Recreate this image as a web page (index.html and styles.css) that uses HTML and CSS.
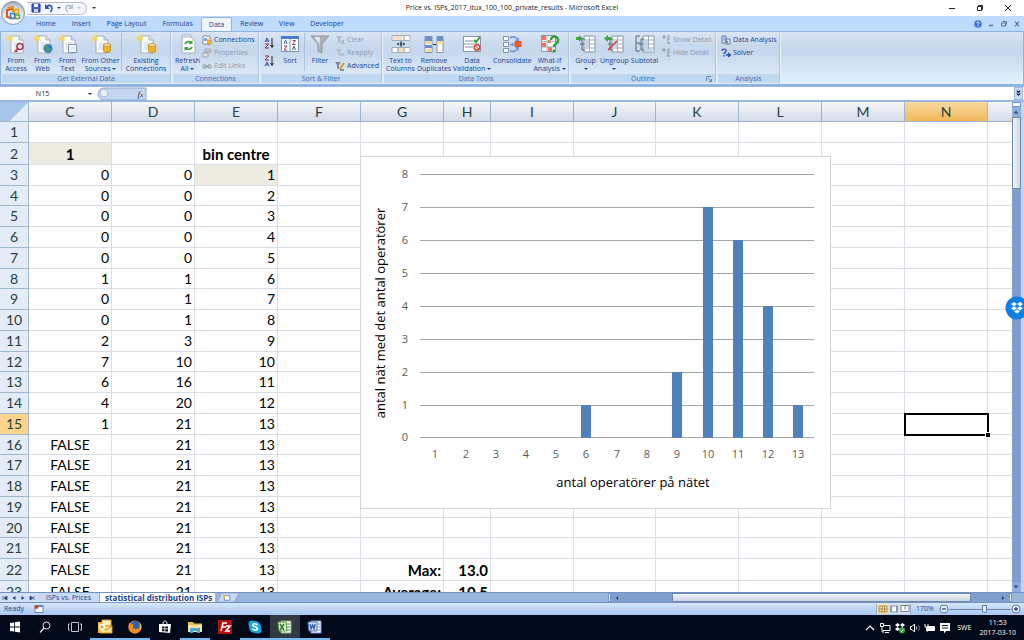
FILE: index.html
```html
<!DOCTYPE html>
<html lang="en">
<head>
<meta charset="utf-8">
<title>Price vs. ISPs_2017_ltux_100_100_private_results - Microsoft Excel</title>
<link rel="stylesheet" href="styles.css">
</head>
<body>
<svg class="defs" aria-hidden="true">
  <defs>
    <symbol id="page" viewBox="0 0 20 20">
      <path d="M5 2h8l4 4v13H5z" fill="#fff" stroke="#a3aebb"/>
      <path d="M13 2v4h4" fill="#dce4ee" stroke="#a3aebb"/>
      <path d="M7.500 9h7M7.500 11h7M7.500 13h7M7.500 15h5" stroke="#c6d0dd"/>
      <path d="M4 0l1 2.500L8 2 6 4.500 8 7 5 6 3.500 9 3 6 0 6.500 2 4 0 2l3 .5z" fill="#f7d465"/>
    </symbol>
    <symbol id="drum" viewBox="0 0 8 10">
      <path d="M.5 2v6c0 2 7 2 7 0V2z" fill="#f0b428" stroke="#b97d12" stroke-width=".7"/>
      <ellipse cx="4" cy="2" rx="3.500" ry="1.500" fill="#fde9a0" stroke="#b97d12" stroke-width=".7"/>
    </symbol>
    <symbol id="outline" viewBox="0 0 20 20">
      <path d="M8 2h11v16H8z" fill="#fff" stroke="#8595a8"/>
      <path d="M8 6h11M8 10h11M8 14h11M13.500 2v16" stroke="#9eabbb"/>
      <path d="M9 7h4v2H9zM9 11h4v2H9z" fill="#c3d5ec"/>
      <path d="M9 5H6v11h3M4 10h4" stroke="#56677c" fill="none"/>
    </symbol>
    <symbol id="detail" viewBox="0 0 10 10">
      <path d="M1 2h4M3 0v4M7 1h2M7 4h2M7 8h2M7 1v8" stroke="#8c98a6" fill="none"/>
    </symbol>
  </defs>
</svg>

<header class="titlebar">
  <div class="quick">
    <button aria-label="Save"><svg viewBox="0 0 10 10"><path d="M1 1h8v8H1z" fill="#4a62c4" stroke="#27378a"/><path d="M3 1h4v3H3z" fill="#e8eefc"/><path d="M3 6h4v3H3z" fill="#c9d3ee"/></svg></button>
    <button aria-label="Undo"><svg viewBox="0 0 10 10"><path d="M2.500 4C6 0 10 4 6.500 9" fill="none" stroke="#2f55b8" stroke-width="1.600"/><path d="M1 1v5h5z" fill="#2f55b8"/></svg></button>
    <i class="caret"></i>
    <button aria-label="Redo"><svg viewBox="0 0 10 10"><path d="M7.500 4C4 0 0 4 3.500 9" fill="none" stroke="#aebccf" stroke-width="1.600"/><path d="M9 1v5H4z" fill="#aebccf"/></svg></button>
    <i class="caret dim"></i>
  </div>
  <i class="caret bar"></i>
  <h1 class="title">Price vs. ISPs_2017_ltux_100_100_private_results - Microsoft Excel</h1>
  <div class="winctl">
    <button aria-label="Minimize"><svg viewBox="0 0 8 8"><path d="M1 4.500h6" stroke="#222"/></svg></button>
    <button aria-label="Restore"><svg viewBox="0 0 8 8"><path d="M1.500 2.500h4v4h-4zM2.500 2.500v-1h4v4h-1" fill="none" stroke="#222"/></svg></button>
    <button aria-label="Close"><svg viewBox="0 0 8 8"><path d="M1 1l6 6M7 1L1 7" stroke="#222"/></svg></button>
  </div>
</header>
<button class="orb" aria-label="Office Button">
  <svg viewBox="0 0 26 26">
    <defs><radialGradient id="orbg" cx=".5" cy=".8" r=".8"><stop offset="0" stop-color="#fff"/><stop offset=".6" stop-color="#dfe5ee"/><stop offset="1" stop-color="#98a5b8"/></radialGradient></defs>
    <circle cx="13" cy="13" r="11.500" fill="url(#orbg)" stroke="#8796ab"/>
    <path d="M12 9l-5 1v7l5 1" fill="none" stroke="#e2541b" stroke-width="2"/>
    <path d="M8 8l5-1v5" fill="none" stroke="#f08a1d" stroke-width="2"/>
    <path d="M14.500 9.500h4v4h-4z" fill="none" stroke="#e8a317" stroke-width="1.500"/>
    <path d="M10.500 13.500h4v5h-4z" fill="none" stroke="#3f77c9" stroke-width="1.500"/>
    <path d="M15.500 15h4v3.500h-4z" fill="none" stroke="#5fae3a" stroke-width="1.500"/>
  </svg>
</button>

<nav class="tabs">
  <a href="#home">Home</a><a href="#insert">Insert</a><a href="#layout">Page Layout</a><a href="#formulas">Formulas</a><a href="#data" class="on">Data</a><a href="#review">Review</a><a href="#view">View</a><a href="#dev">Developer</a>
  <div class="docctl">
    <button aria-label="Help"><svg viewBox="0 0 8 8"><circle cx="4" cy="4" r="3.800" fill="#3c74d6"/><path d="M2.700 3.200C3 1.500 5.500 1.800 5 3.400L4 4.500M4 5.500v1" fill="none" stroke="#fff"/></svg></button>
    <button aria-label="Minimize workbook"><svg viewBox="0 0 8 8"><path d="M2 5.500h4" stroke="#5c6f8c" stroke-width="1.500"/></svg></button>
    <button aria-label="Restore workbook"><svg viewBox="0 0 8 8"><path d="M1.500 3h4v3h-4zM2.500 1.500h4v3" fill="none" stroke="#5c6f8c"/></svg></button>
    <button aria-label="Close workbook"><svg viewBox="0 0 8 8"><path d="M2 1.500l4 5M6 1.500l-4 5" stroke="#5c6f8c" stroke-width="1.200"/></svg></button>
  </div>
</nav>

<section class="ribbon">
  <div class="group g-ext">
    <div class="tools">
      <button class="big"><svg viewBox="0 0 20 20"><use href="#page"/><circle cx="14" cy="12.500" r="3" fill="#f6dfe6" stroke="#a8395a" stroke-width="1.600"/><path d="M12 14.500L8.500 18M10 16.500l1.500 1.500" stroke="#a8395a" stroke-width="1.600"/></svg>From<br>Access</button>
      <button class="big"><svg viewBox="0 0 20 20"><use href="#page"/><circle cx="15" cy="14.500" r="4.500" fill="#3b7fc0"/><path d="M12 12c2-2 3 0 3 1s3 2 1 5c-1-1-3-2-4-6" fill="#4aa64c"/></svg>From<br>Web</button>
      <button class="big"><svg viewBox="0 0 20 20"><use href="#page"/><path d="M10.500 10.500h8v8h-8z" fill="#f4f7fb" stroke="#8595a8"/><path d="M12 13h5M12 15h5" stroke="#d5dce6"/></svg>From<br>Text</button>
      <button class="big"><svg viewBox="0 0 20 20"><use href="#page"/><use href="#drum" x="12" y="9" width="8" height="10"/></svg>From Other<br>Sources <i class="caret"></i></button>
      <i class="sep"></i>
      <button class="big"><svg viewBox="0 0 20 20"><use href="#page"/><use href="#drum" x="12" y="9" width="8" height="10"/></svg>Existing<br>Connections</button>
    </div>
    <h2>Get External Data</h2>
  </div>
  <div class="group g-con">
    <div class="tools">
      <button class="big"><svg viewBox="0 0 20 20"><path d="M4 4V1h9v3" fill="#fff" stroke="#a3aebb"/><path d="M4 3h9l4 4v12H4z" fill="#fff" stroke="#a3aebb"/><path d="M7 10c1-3 5-3 6-1M14 13c-1 3-5 3-6 1" fill="none" stroke="#3f9e3f" stroke-width="1.800"/><path d="M14.500 6v4h-4zM6.500 17v-4h4z" fill="#3f9e3f"/></svg>Refresh<br>All <i class="caret"></i></button>
      <div class="list">
        <button><svg viewBox="0 0 10 10"><path d="M1 1h7v8H1z" fill="#fff" stroke="#7c8ba0"/><path d="M2 3h3v3H2z" fill="#7fa8dc"/><use href="#drum" x="5" y="3" width="5" height="7"/></svg>Connections</button>
        <button disabled><svg viewBox="0 0 10 10"><path d="M3 1h6v3H3zM1 5h5v4H1z" fill="#dfe5ec" stroke="#98a4b2"/><path d="M3 3h5" stroke="#98a4b2"/></svg>Properties</button>
        <button disabled><svg viewBox="0 0 10 10"><path d="M1 4h3v3H1zM6 4h3v3H6zM3 5.500h4" fill="none" stroke="#8c98a6"/></svg>Edit Links</button>
      </div>
    </div>
    <h2>Connections</h2>
  </div>
  <div class="group g-sort">
    <div class="tools">
      <div class="az">
        <button aria-label="Sort A to Z"><svg viewBox="0 0 10 12"><path d="M1 5l2-4 2 4M2 4h2" fill="none" stroke="#2c54a8"/><path d="M1 7h4l-4 4h4" fill="none" stroke="#8a3048"/><path d="M8 1v9M6.500 8L8 10.500 9.500 8" fill="none" stroke="#222"/></svg></button>
        <button aria-label="Sort Z to A"><svg viewBox="0 0 10 12"><path d="M1 1h4L1 5h4" fill="none" stroke="#8a3048"/><path d="M1 11l2-4 2 4M2 10h2" fill="none" stroke="#2c54a8"/><path d="M8 1v9M6.500 8L8 10.500 9.500 8" fill="none" stroke="#222"/></svg></button>
      </div>
      <button class="big"><svg viewBox="0 0 20 20"><path d="M1.500 2.500h17v15h-17z" fill="#fff" stroke="#7690b8"/><path d="M1 2h18v3H1z" fill="#4b7bd0"/><path d="M10 5v12" stroke="#7690b8"/><path d="M4 10l1.500-4L7 10M12.500 16l1.500-4 1.500 4" fill="none" stroke="#3a5ca8"/><path d="M4 12h3l-3 4h3M12.500 6.500h3l-3 4h3" fill="none" stroke="#8a3a58"/></svg>Sort</button>
      <i class="sep"></i>
      <button class="big"><svg viewBox="0 0 20 20"><path d="M1 2h18l-7 8v9l-4-2v-7z" fill="#aab0b6" stroke="#8f979f"/><path d="M4 3h6l-1 14V10z" fill="#e4e7ea"/></svg>Filter</button>
      <div class="list">
        <button disabled><svg viewBox="0 0 10 10"><path d="M1 1h6L5 4v4L3 7V4z" fill="#b4bcc5"/><path d="M6 5l3 4M9 5L6 9" stroke="#98a4b2"/></svg>Clear</button>
        <button disabled><svg viewBox="0 0 10 10"><path d="M1 1h6L5 4v4L3 7V4z" fill="#b4bcc5"/><path d="M6 8c0-3 3-3 3 0" fill="none" stroke="#98a4b2"/></svg>Reapply</button>
        <button><svg viewBox="0 0 10 10"><path d="M0 1h6L4 4v5L2 7V4z" fill="#7c8794"/><path d="M9 2L5 8" stroke="#d79a1f" stroke-width="2"/><path d="M5 9h4" stroke="#333"/></svg>Advanced</button>
      </div>
    </div>
    <h2>Sort &amp; Filter</h2>
  </div>
  <div class="group g-data">
    <div class="tools">
      <button class="big"><svg viewBox="0 0 20 20"><path d="M1 1.500h18v5H1zM1 13.500h18v5H1z" fill="#fff" stroke="#a3aebb"/><path d="M2 2h9v4H2z" fill="#f9dfc2"/><path d="M7 14h5v4H7z" fill="#f9dfc2"/><path d="M7 13v5M13 13v5M13 2v4" stroke="#8595a8"/><path d="M10 7v6M8 9l-2 1 2 1M12 9l2 1-2 1" stroke="#3b4c66" fill="none"/><circle cx="10" cy="10" r="1.500" fill="#3b4c66"/></svg>Text to<br>Columns</button>
      <button class="big"><svg viewBox="0 0 20 20"><path d="M1 2.500h7v16H1zM13 2.500h6v16h-6z" fill="#fff" stroke="#7d90b4"/><path d="M1 3h7v4H1zM1 11h7v3H1zM13 3h6v4h-6z" fill="#6f8cc8"/><path d="M1 7h7v3H1zM13 7h6v3h-6zM1 15h7v3H1z" fill="#f3dc93"/><path d="M9 10.500h3" stroke="#333"/></svg>Remove<br>Duplicates</button>
      <button class="big"><svg viewBox="0 0 20 20"><path d="M1.500 2.500h17v15h-17z" fill="#fff" stroke="#8595a8"/><path d="M3 6h8v2H3zM3 12h8v2H3z" fill="#b9c6d6"/><path d="M2 10h16" stroke="#8595a8"/><path d="M12 6l2 2 4-5" fill="none" stroke="#2f9e35" stroke-width="2"/><circle cx="15" cy="13.500" r="2.800" fill="#fff" stroke="#d5402b" stroke-width="1.500"/><path d="M13 12l4 3" stroke="#d5402b"/></svg>Data<br>Validation <i class="caret"></i></button>
      <button class="big"><svg viewBox="0 0 20 20"><path d="M1.500 2.500h5v4h-5zM1.500 8.500h5v4h-5zM1.500 14.500h5v4h-5z" fill="#fff" stroke="#8595a8"/><path d="M13 7.500h6v5h-6z" fill="#f0602c" stroke="#d8552a"/><path d="M8 4c3-2 6-1 7 1M8 17c3 1 6 0 7-2M8 10.500h3" fill="none" stroke="#6f95d8" stroke-width="1.600"/><path d="M17 3v4h-4zM17 17v-4h-4zM10 8.500l2.500 2-2.500 2z" fill="#6f95d8"/></svg>Consolidate</button>
      <button class="big"><svg viewBox="0 0 20 20"><path d="M1.500 1.500h14v16h-14z" fill="#fff" stroke="#8595a8"/><path d="M2 2h4v4H2zM2 9h4v4H2zM8 6h3v3H8zM8 13h4v4H8z" fill="#f0735a"/><path d="M1 7.500h14M1 13h14M7 2v16" stroke="#a3aebb"/><path d="M11 6c0-5 8-4 7 1 0 3-4 2-4 6M14 15.500v3" fill="none" stroke="#36a03a" stroke-width="2.500"/></svg>What-If<br>Analysis <i class="caret"></i></button>
    </div>
    <h2>Data Tools</h2>
  </div>
  <div class="group g-out">
    <div class="tools">
      <button class="big"><svg viewBox="0 0 20 20"><use href="#outline"/><path d="M0 3h3V1l4 3.500L3 8V6H0z" fill="#43a843"/></svg>Group<br><i class="caret"></i></button>
      <button class="big"><svg viewBox="0 0 20 20"><use href="#outline"/><path d="M7 3H4V1L0 4.500 4 8V6h3z" fill="#43a843"/><path d="M4 16L13 7" stroke="#d33c35" stroke-width="1.500"/></svg>Ungroup<br><i class="caret"></i></button>
      <button class="big"><svg viewBox="0 0 20 20"><use href="#outline"/><path d="M5 2H1v15h4M1 9h4" fill="none" stroke="#56677c"/><path d="M9 15h10v3H9z" fill="#c8d8ec"/></svg>Subtotal</button>
      <div class="list">
        <button disabled><svg viewBox="0 0 10 10"><use href="#detail"/></svg>Show Detail</button>
        <button disabled><svg viewBox="0 0 10 10"><use href="#detail"/></svg>Hide Detail</button>
      </div>
    </div>
    <h2>Outline</h2>
    <svg class="launch" viewBox="0 0 6 6"><path d="M.5 5V.5H5M2 2l3 3M5.500 3v2.500H3" fill="none" stroke="#6b86ad"/></svg>
  </div>
  <div class="group g-ana">
    <div class="tools">
      <div class="list">
        <button><svg viewBox="0 0 10 10"><path d="M1 1h4v7H1zM5 4h4v5H5z" fill="#eaf1fb" stroke="#60779a"/><path d="M2 3h2M2 5h2M6.500 8V6" stroke="#4a78c8"/></svg>Data Analysis</button>
        <button><svg viewBox="0 0 10 10"><path d="M1 3c0-3 5-2 4 0C5 5 3 4 3 6M3 7v1.500" fill="none" stroke="#2c50b8" stroke-width="1.400"/><path d="M5 7h4M7 5l2.500 2L7 9" fill="none" stroke="#2c50b8" stroke-width="1.300"/></svg>Solver</button>
      </div>
    </div>
    <h2>Analysis</h2>
  </div>
</section>

<div class="formula">
  <input class="namebox" aria-label="Name Box" value="N15">
  <i class="caret"></i>
  <button class="fx" aria-label="Insert Function"><svg viewBox="0 0 50 14"><path d="M7 1h42v12H7A6 6 0 0 1 7 1z" fill="#c3d6f0" stroke="#8eaad2"/><circle cx="7" cy="6" r="4" fill="#e6effa" stroke="#a9bfdd"/></svg><em>f<small>x</small></em></button>
  <input class="entry" aria-label="Formula">
  <button class="expand" aria-label="Expand formula bar"><svg viewBox="0 0 8 10"><path d="M2 2l2 2 2-2M2 5l2 2 2-2" fill="none" stroke="#223" stroke-width="1.300"/></svg></button>
</div>

<main class="sheet">
  <div class="pane">
    <table class="grid" id="grid"></table>
    <svg class="chart" viewBox="0 0 471 353" role="img" aria-label="antal operatörer på nätet">
      <rect x=".5" y=".5" width="470" height="352" fill="#fff" stroke="#d3d3d3"/>
      <path class="rule" d="M60 18.500h394M60 51.500h394M60 84.500h394M60 117.500h394M60 150.500h394M60 183.500h394M60 216.500h394M60 249.500h394M60 281.500h394"/>
      <path class="bars" d="M221 249h10v33h-10zM312 216h10v66h-10zM343 51h10v231h-10zM373 84h10v198h-10zM403 150h10v132h-10zM433 249h10v33h-10z"/>
      <g class="tick">
        <text x="45" y="22">8</text><text x="45" y="55">7</text><text x="45" y="88">6</text><text x="45" y="121">5</text><text x="45" y="154">4</text><text x="45" y="187">3</text><text x="45" y="220">2</text><text x="45" y="253">1</text><text x="45" y="285">0</text>
        <text x="75" y="302">1</text><text x="106" y="302">2</text><text x="136" y="302">3</text><text x="166" y="302">4</text><text x="196" y="302">5</text><text x="226" y="302">6</text><text x="257" y="302">7</text><text x="287" y="302">8</text><text x="317" y="302">9</text><text x="348" y="302">10</text><text x="378" y="302">11</text><text x="408" y="302">12</text><text x="438" y="302">13</text>
      </g>
      <g class="axis">
        <text x="273" y="331">antal operatörer på nätet</text>
        <text transform="translate(25 157) rotate(-90)">antal nät med det antal operatörer</text>
      </g>
    </svg>
  </div>
  <div class="vscroll">
    <i class="split"></i>
    <button aria-label="Scroll up"><svg viewBox="0 0 8 8"><path d="M1.500 5.500L4 2.500l2.500 3z" fill="#2f4d80"/></svg></button>
    <i class="thumb"></i>
    <span class="grow"></span>
    <button aria-label="Scroll down"><svg viewBox="0 0 8 8"><path d="M1.500 2.500L4 5.500l2.500-3z" fill="#2f4d80"/></svg></button>
  </div>
  <svg class="dropbox" viewBox="0 0 24 24" role="img" aria-label="Dropbox"><circle cx="12" cy="12" r="11.500" fill="#0f7fe6"/><path d="M9 6l3 2-3 2.200L6 8zM15 6l3 2-3 2.200L12 8zM9 10.200l3 2-3 2.200-3-2.200zM15 10.200l3 2-3 2.200-3-2.200zM9 15.500l3-2 3 2-3 2z" fill="#fff"/></svg>
</main>

<div class="sheetbar">
  <div class="navs">
    <button aria-label="First sheet"><svg viewBox="0 0 6 6"><path d="M1 1v4M5 1L2 3l3 2z" stroke="#223f78" fill="#223f78" stroke-width=".7"/></svg></button>
    <button aria-label="Previous sheet"><svg viewBox="0 0 6 6"><path d="M4.500 1L1.500 3l3 2z" fill="#223f78"/></svg></button>
    <button aria-label="Next sheet"><svg viewBox="0 0 6 6"><path d="M1.500 1l3 2-3 2z" fill="#223f78"/></svg></button>
    <button aria-label="Last sheet"><svg viewBox="0 0 6 6"><path d="M5 1v4M1 1l3 2-3 2z" stroke="#223f78" fill="#223f78" stroke-width=".7"/></svg></button>
  </div>
  <a class="stab" href="#s1">ISPs vs. Prices</a>
  <a class="stab on" href="#s2">statistical distribution ISPs</a>
  <button class="newtab" aria-label="Insert Worksheet"><svg viewBox="0 0 26 10"><path d="M1 10L6 0h19l-5 10z" fill="#c7daf3" stroke="#8fa9ce"/><path d="M9 3h6v5H9z" fill="#fff" stroke="#6d82a3"/><path d="M8 1l1 2 2 0-1.500 1.500L10 6 8 5z" fill="#f3bd3c"/></svg></button>
  <span class="grow"></span>
  <div class="hscroll">
    <i class="split"></i>
    <button aria-label="Scroll left"><svg viewBox="0 0 6 6"><path d="M4 1L2 3l2 2z" fill="#223f78"/></svg></button>
    <i class="track"></i>
    <i class="thumb"></i>
    <i class="track end"></i>
    <button aria-label="Scroll right"><svg viewBox="0 0 6 6"><path d="M2 1l2 2-2 2z" fill="#223f78"/></svg></button>
    <i class="split"></i>
  </div>
</div>

<footer class="status">
  <span class="ready">Ready</span>
  <button class="macro" aria-label="Record Macro"><svg viewBox="0 0 10 10"><path d="M1 1.500h8v7H1z" fill="#fff" stroke="#6d82a3"/><path d="M1 1h8v2H1z" fill="#5b86cc"/><circle cx="2.500" cy="3" r="2" fill="#d8432e"/></svg></button>
  <span class="grow"></span>
  <div class="views">
    <button class="on" aria-label="Normal"><svg viewBox="0 0 10 8"><path d="M1 1h8v6H1zM1 4h8M4 1v6M6.500 1v6" fill="none" stroke="#a78d4a"/></svg></button>
    <button aria-label="Page Layout"><svg viewBox="0 0 10 8"><path d="M1 .5h8v7H1z" fill="#8b98ab"/><path d="M3 1.500h4v5H3z" fill="#fff"/></svg></button>
    <button aria-label="Page Break Preview"><svg viewBox="0 0 10 8"><path d="M1 .5h8v6H1zM5 .5v4" fill="#fff" stroke="#6f7f95"/></svg></button>
  </div>
  <span class="pct">170%</span>
  <button class="zoomb" aria-label="Zoom out"><svg viewBox="0 0 10 10"><circle cx="5" cy="5" r="4" fill="#eaf2fc" stroke="#5f7699"/><path d="M3 5h4" stroke="#33496d" stroke-width="1.300"/></svg></button>
  <input class="slider" type="range" aria-label="Zoom" min="0" max="100" value="58">
  <button class="zoomb" aria-label="Zoom in"><svg viewBox="0 0 10 10"><circle cx="5" cy="5" r="4" fill="#eaf2fc" stroke="#5f7699"/><path d="M3 5h4M5 3v4" stroke="#33496d" stroke-width="1.300"/></svg></button>
</footer>

<div class="taskbar">
  <div class="apps">
    <button aria-label="Start"><svg viewBox="0 0 16 16"><path d="M3 4l4-.6v4.200H3zM7.800 3.300L13 2.500v5.100H7.800zM3 8.400h4v4.200L3 12zM7.800 8.400H13v5.100l-5.200-.8z" fill="#fff"/></svg></button>
    <button aria-label="Search"><svg viewBox="0 0 16 16"><circle cx="9.500" cy="6.500" r="3.500" fill="none" stroke="#e8eaee"/><path d="M7 9l-4 4.500" stroke="#e8eaee" stroke-width="1.200"/></svg></button>
    <button aria-label="Task View"><svg viewBox="0 0 16 16"><path d="M4.500 3.500h7v9h-7zM3 5H1.500v6H3M13 5h1.500v6H13" fill="none" stroke="#c3c7ce"/></svg></button>
    <button class="run" aria-label="Outlook"><svg viewBox="0 0 16 16"><path d="M1 3h11v11H1z" fill="#f3b92e"/><path d="M5 1h9v6H5z" fill="#fff3c4" stroke="#dc9c1b"/><path d="M3 7h12v7H3z" fill="#fbe28a" stroke="#d9981d"/><path d="M3 7l6 4 6-4" fill="none" stroke="#c77f12"/><circle cx="5" cy="8" r="2.500" fill="none" stroke="#fff" stroke-width="1.300"/></svg></button>
    <button class="run" aria-label="Firefox"><svg viewBox="0 0 16 16"><circle cx="8" cy="8" r="6.500" fill="#e8701a"/><circle cx="8.500" cy="6.500" r="4.500" fill="#2b62b0"/><path d="M2 4c2 0 3 1 5 2-2 1-1 4 2 4 2 0 4-1 5-3 0 5-3 7.500-6 7.500S1 12 1.500 8z" fill="#f08a1e"/><path d="M12 3c3 3 3 6 1 9 0-3 0-6-1-9" fill="#fbc52d"/></svg></button>
    <button aria-label="Store"><svg viewBox="0 0 16 16"><path d="M2 5h12l-1 9-11-1z" fill="#fff"/><path d="M6 5c0-4 4-4 4 0" fill="none" stroke="#fff"/><path d="M5 7.500h2.500V9.500H5zM8.300 7.500H11v2H8.300zM5 10.200h2.500v2H5zM8.300 10.200H11v2.300H8.300z" fill="#020a1a"/></svg></button>
    <button class="run" aria-label="File Explorer"><svg viewBox="0 0 16 16"><path d="M1 3h5l1 1.500h8V13H1z" fill="#e9bf55"/><path d="M1 6h14v7H1z" fill="#fbe49b"/><path d="M3 14V9h10v5h-3v-2H6v2z" fill="#4aa7dc"/></svg></button>
    <button aria-label="FileZilla"><svg viewBox="0 0 16 16"><path d="M1 1h14v14H1z" fill="#b40d0d"/><path d="M4 12L6 4h4M5 8h4M9 7h4l-4 5h4" fill="none" stroke="#fff" stroke-width="1.600"/></svg></button>
    <button class="run" aria-label="Skype"><svg viewBox="0 0 16 16"><circle cx="8" cy="8" r="6" fill="#14a8e8"/><circle cx="5" cy="5" r="3.500" fill="#14a8e8"/><circle cx="11" cy="11" r="3.500" fill="#14a8e8"/><path d="M10.500 6C9 4 5.500 4.500 5.800 6.300c.3 2 4.700 1 4.700 3.200 0 2-4 2.200-5 .2" fill="none" stroke="#fff" stroke-width="1.600"/></svg></button>
    <button class="run active" aria-label="Excel"><svg viewBox="0 0 16 16"><path d="M4 2h10v12H4z" fill="#fff" stroke="#7fae6b"/><path d="M9 5h4M9 8h4M9 11h4" stroke="#7fae6b" stroke-width="1.500"/><path d="M1 3h8l1 9H2z" fill="#dff0d5" stroke="#5b9a48"/><path d="M3 5l4 6M7 5l-4 6" stroke="#2e7d32" stroke-width="1.500"/></svg></button>
    <button class="run" aria-label="Word"><svg viewBox="0 0 16 16"><path d="M4 2h10v12H4z" fill="#fff" stroke="#6f92cc"/><path d="M10 5h3M10 8h3M10 11h3" stroke="#6f92cc"/><path d="M1 3h9v9H2z" fill="#dce8fa" stroke="#4b74ba"/><path d="M3 5l1 5 1.500-4L7 10l1-5" fill="none" stroke="#2b55a4" stroke-width="1.300"/></svg></button>
  </div>
  <span class="grow"></span>
  <div class="tray">
    <svg viewBox="0 0 12 12"><path d="M2 8l4-4 4 4" fill="none" stroke="#fff" stroke-width="1.200"/></svg>
    <svg viewBox="0 0 12 12"><path d="M4 3.500h7v5H4M6 10.500h4M1.500 1.500h3v3h-3zM3 5v5h2" fill="none" stroke="#fff"/></svg>
    <svg viewBox="0 0 12 12"><path d="M3.500 1L6 3 3.500 5 1 3zM8.500 1L11 3 8.500 5 6 3zM3.500 5L6 7 3.500 9 1 7zM8 5l3 2-3 2-2-2z" fill="#fff"/><circle cx="8" cy="8.500" r="3" fill="#31a542"/><path d="M6.500 8.500l1 1 2-2" fill="none" stroke="#fff"/></svg>
    <svg viewBox="0 0 12 12"><path d="M1.500 4.500H3L5.500 2v8L3 7.500H1.500z" fill="none" stroke="#fff"/><path d="M7 4.500c1 1 1 2 0 3" fill="none" stroke="#fff"/><path d="M9 3c2 2 2 4 0 6" fill="none" stroke="#7c828c"/></svg>
    <svg viewBox="0 0 12 12"><path d="M3.500 4.500h7v4h-7z" fill="#fff" stroke="#fff"/><path d="M1 2v3h3V2M2.500 5v4H4" fill="none" stroke="#fff"/></svg>
    <svg viewBox="0 0 12 12"><path d="M1 1h10v8H7l-2 2.500V9H1z" fill="#fff"/><path d="M3 3.500h6M3 6h6" stroke="#06101f"/></svg>
    <span class="lang">SWE</span>
    <time class="clock">11:53<br>2017-03-10</time>
  </div>
</div>
<script src="grid.js"></script>
</body>
</html>
```

FILE: styles.css
```css
* { box-sizing: border-box; }
body {
  margin: 0;
  height: 100vh;
  display: flex;
  flex-direction: column;
  overflow: hidden;
  position: relative;
  font: 7px/8px "Open Sans", "Noto Sans", sans-serif;
  color: #15428b;
  background: #bfdbff;
}
button, input { font: inherit; color: inherit; border: 0; padding: 0; margin: 0; background: none; }
input { min-width: 0; }
a { color: inherit; text-decoration: none; }
h1, h2 { margin: 0; font: inherit; }
svg { display: block; }
.defs { position: absolute; width: 0; height: 0; }
.grow { flex: 1; }
.caret {
  display: inline-block;
  border: 2px solid transparent;
  border-top-color: #15428b;
  border-bottom: 0;
  vertical-align: middle;
}
.caret.dim { border-top-color: #aebccf; }
.caret.bar { border-top-color: #333; margin-left: 5px; }

.titlebar { height: 16px; flex: none; display: flex; align-items: center; background: #fff; color: #222; }
.quick {
  width: 60px; height: 13px; margin-left: 27px; padding-left: 4px;
  display: flex; align-items: center; gap: 3px;
  border: 1px solid #b3bccb; border-left: 0; border-radius: 0 7px 7px 0;
  background: #f4f7fb;
}
.quick svg { width: 10px; height: 10px; }
.title { flex: 1; padding-right: 20px; text-align: center; white-space: nowrap; }
.winctl { display: flex; gap: 20px; padding-right: 12px; }
.winctl svg { width: 8px; height: 8px; }
.orb { position: absolute; left: 0; top: 0; width: 26px; height: 26px; }

.tabs { height: 15px; flex: none; display: flex; align-items: flex-end; padding-left: 28px; }
.tabs a { height: 14px; line-height: 14px; padding: 0 8px; white-space: nowrap; }
.tabs .on { background: #eef5fd; border: 1px solid #8db2e3; border-bottom: 0; border-radius: 2px 2px 0 0; line-height: 13px; padding: 0 7px; }
.docctl { margin-left: auto; align-self: center; display: flex; gap: 5px; padding-right: 3px; }
.docctl svg { width: 8px; height: 8px; }

.ribbon {
  height: 55px; flex: none;
  display: flex; gap: 2px; padding: 1px 2px 1px 1px;
  border: solid #8db2e3; border-width: 1px 1px 2px;
  background: linear-gradient(#dbe6f4, #c9d9ed 25%, #c7d8ed 40%, #e3f2ff);
}
.group {
  position: relative;
  display: flex; flex-direction: column;
  border-right: 1px solid #a9c2e0;
  box-shadow: 1px 0 #eef5fd;
}
.group h2 { height: 9px; line-height: 9px; text-align: center; color: #3e6aaa; background: #c1d8f1; }
.tools { flex: 1; display: grid; align-items: start; }
.g-ext { width: 169px; }
.g-ext .tools { grid-template-columns: 28px 25px 25px 41px 1px 1fr; }
.g-con { width: 86px; }
.g-con .tools { grid-template-columns: 29px 1fr; }
.g-sort { width: 121px; }
.g-sort .tools { grid-template-columns: 15px 28px 1px 30px 1fr; }
.g-data { width: 185px; }
.g-data .tools { grid-template-columns: 33px 34px 42px 38px 1fr; }
.g-out { width: 145px; }
.g-out .tools { grid-template-columns: 29px 28px 33px 1fr; }
.g-ana { width: 62px; }
.big { display: block; padding-top: 1px; text-align: center; white-space: nowrap; }
.big svg { width: 20px; height: 20px; margin: 0 auto 3px; }
.sep { width: 1px; height: 38px; background: #a9c2e0; }
.list button { display: flex; align-items: center; gap: 2px; height: 13px; white-space: nowrap; }
.list button:disabled { color: #8d9aab; }
.list svg { width: 10px; height: 10px; flex: none; }
.az { display: grid; gap: 6px; padding: 4px 0 0 3px; }
.az svg { width: 10px; height: 12px; }
.g-ana .list { padding-left: 3px; }
.launch { position: absolute; right: 3px; bottom: 1px; width: 6px; height: 6px; }

.formula { height: 16px; flex: none; display: flex; align-items: center; background: #fff; border: solid #9bb9e0; border-width: 1px 0 2px; color: #222; }
.namebox { width: 85px; text-align: center; }
.formula > .caret { border-top-color: #222; margin-left: 3px; }
.fx { position: relative; width: 50px; height: 14px; margin: 0 0 0 5px; }
.fx em { position: absolute; right: 4px; top: 2px; font: italic 9px/10px "Liberation Serif", serif; color: #333; }
.fx small { font-size: 7px; }
.entry { flex: 1; }
.expand { width: 9px; height: 13px; margin-right: 1px; background: #c9dcf5; border: 1px solid #9bb9e0; }

.sheet { flex: 1; min-height: 0; display: flex; position: relative; }
.pane { flex: 1; min-width: 0; position: relative; overflow: hidden; background: #fff; }
.grid { width: 1071px; table-layout: fixed; border-collapse: separate; border-spacing: 0; color: #000; font: 14px/18px Lato, "Open Sans", sans-serif; }
.grid th, .grid td { height: 21px; padding: 0 2px; border: solid #d8dde8; border-width: 0 1px 1px 0; overflow: visible; white-space: nowrap; }
.grid th { font-weight: 400; color: #27413e; text-align: center; padding: 0; }
.grid thead th { height: 20px; border-color: #9eb6ce; background: linear-gradient(#f4f7fb, #d5dde9); }
.grid thead .corner { background: linear-gradient(135deg, #a9c4e9 60%, #e4ecf7 60%); }
.grid tbody th { background: #e4ecf7; border-color: #9eb6ce; }
.grid thead .sel { background: linear-gradient(#f9d99f, #f1b95c); }
.grid tbody .sel { background: #ffd58d; }
.grid td { text-align: right; }
.grid .mid { text-align: center; }
.grid .bold { font-weight: 700; font-size: 15px; }
.grid .tan { background: #eeece1; }
.grid .tall > * { height: 22px; }
.grid .short > * { height: 20px; }
.grid .cursor { position: relative; }
.cursor::before { content: ""; position: absolute; inset: -1px -2px -2px -1px; border: 2px solid #000; }
.cursor::after { content: ""; position: absolute; right: -3px; bottom: -3px; width: 4px; height: 4px; background: #000; border: solid #fff; border-width: 1px 0 0 1px; }

.chart { position: absolute; left: 360px; top: 54px; width: 471px; height: 353px; }
.rule { stroke: #a6a6a6; fill: none; }
.bars { fill: #4f81bd; }
.tick { font: 11px "Open Sans", sans-serif; fill: #595959; text-anchor: middle; }
.axis { font: 13px "Open Sans", sans-serif; fill: #000; text-anchor: middle; }

.vscroll { width: 12px; display: flex; flex-direction: column; background: #7f9fca; border-right: 3px solid #bfd5f2; }
.vscroll button { height: 10px; background: #8fafdb; }
.vscroll svg { width: 8px; height: 8px; }
.vscroll .split { height: 5px; background: #fff; border: 1px solid #6f92c4; }
.vscroll .thumb { height: 72px; background: linear-gradient(90deg, #f2f5fa, #ccd6e5); border: 1px solid #6f87ab; border-radius: 1px; }
.dropbox { position: absolute; right: -5px; top: 194px; width: 24px; height: 24px; }

.sheetbar { height: 10px; flex: none; display: flex; align-items: stretch; background: #9ab5dc; border-top: 1px solid #7392c2; line-height: 9px; }
.navs { display: flex; align-items: center; gap: 3px; width: 38px; padding-left: 2px; background: #d1e1f5; }
.navs svg { width: 6px; height: 6px; }
.stab { padding: 0 8px; background: #c9dbf3; border-right: 1px solid #8fa9ce; white-space: nowrap; }
.stab.on { padding: 0 3px 0 5px; background: #fff; font-weight: 700; font-size: 8px; border: 0; }
.newtab svg { width: 26px; height: 9px; }
.hscroll { width: 404px; margin-right: 12px; display: flex; align-items: stretch; background: #7f9fca; }
.hscroll .split { width: 3px; background: #fff; border: 1px solid #6f92c4; }
.hscroll button { width: 12px; display: grid; place-items: center; }
.hscroll svg { width: 6px; height: 6px; }
.hscroll .track { flex: 49; }
.hscroll .track.end { flex: 26; }
.hscroll .thumb { flex: 299; background: linear-gradient(#f2f5fa, #c9d4e4); border: 1px solid #6f87ab; border-radius: 1px; }

.status { height: 13px; flex: none; display: flex; align-items: center; padding: 0 3px 0 4px; border-top: 1px solid #7392c2; background: linear-gradient(#d8e8fc, #bdd5f5 50%, #a9c8f2); }
.ready { width: 30px; }
.macro svg, .zoomb svg { width: 10px; height: 10px; }
.views { display: flex; border: 1px solid #8fa9ce; border-width: 0 1px; }
.views button { width: 11px; height: 10px; display: grid; place-items: center; background: #d4dfec; }
.views .on { background: #fbe3a0; }
.views svg { width: 10px; height: 8px; }
.pct { width: 28px; text-align: center; }
.slider { appearance: none; width: 62px; height: 10px; background: linear-gradient(#6f87ab, #6f87ab) center/100% 1px no-repeat; }
.slider::-webkit-slider-thumb { appearance: none; width: 5px; height: 8px; background: #eaf2fc; border: 1px solid #5f7699; border-radius: 1px 1px 3px 3px; }

.taskbar { height: 25px; flex: none; display: flex; background: #020a1a; color: #fff; }
.apps { display: flex; }
.apps button { width: 30px; display: grid; place-items: center; border-bottom: 2px solid transparent; }
.apps .run { border: solid #76b9ed; border-width: 0 0 2px; box-shadow: inset 3px 0 #020a1a, inset -3px 0 #020a1a; }
.apps .active { background: #333a46; box-shadow: none; }
.apps svg { width: 16px; height: 16px; }
.tray { display: flex; align-items: center; gap: 3px; padding-right: 8px; }
.tray svg { width: 12px; height: 12px; }
.lang { margin: 0 5px 0 3px; }
.clock { line-height: 10px; text-align: center; }
```

FILE: grid.js
```js
const columns = "CDEFGHIJKLMNO".split("");
const widths = { H: 47, J: 82 };
const c = [0, 0, 0, 0, 0, 1, 0, 0, 2, 7, 6, 4, 1];
const d = [0, 0, 0, 0, 0, 1, 1, 1, 3, 10, 16, 20, 21];
const cells = {
  C2: ["1", "mid bold tan"],
  E2: ["bin centre", "mid bold"],
  E3: ["1", "tan"],
  G22: ["Max:", "bold"],
  H22: ["13.0", "bold"],
  G23: ["Average:", "bold"],
  H23: ["10.5", "bold"],
  N15: ["", "cursor"]
};

function cell(col, row) {
  if (cells[col + row]) return cells[col + row];
  if (row < 3) return ["", ""];
  const i = row - 3;
  if (col === "C") return i < 13 ? [c[i], ""] : ["FALSE", "mid"];
  if (col === "D") return [i < 13 ? d[i] : 21, ""];
  if (col === "E") return [Math.min(i + 1, 13), ""];
  return ["", ""];
}

let html = '<colgroup><col style="width:29px">';
for (const col of columns) html += `<col style="width:${widths[col] || 83}px">`;
html += '</colgroup><thead><tr><th class="corner"></th>';
for (const col of columns) {
  const label = col === "O" ? "" : col;
  html += `<th scope="col"${col === "N" ? ' class="sel"' : ""}>${label}</th>`;
}
html += "</tr></thead><tbody>";
for (let row = 1; row <= 23; row++) {
  const size = row === 2 || row >= 22 ? "tall" : row % 4 === 0 ? "short" : "";
  html += `<tr class="${size}"><th scope="row"${row === 15 ? ' class="sel"' : ""}>${row}</th>`;
  for (const col of columns) {
    const [text, cls] = cell(col, row);
    html += `<td class="${cls}">${text}</td>`;
  }
  html += "</tr>";
}
document.getElementById("grid").innerHTML = html + "</tbody>";
```
